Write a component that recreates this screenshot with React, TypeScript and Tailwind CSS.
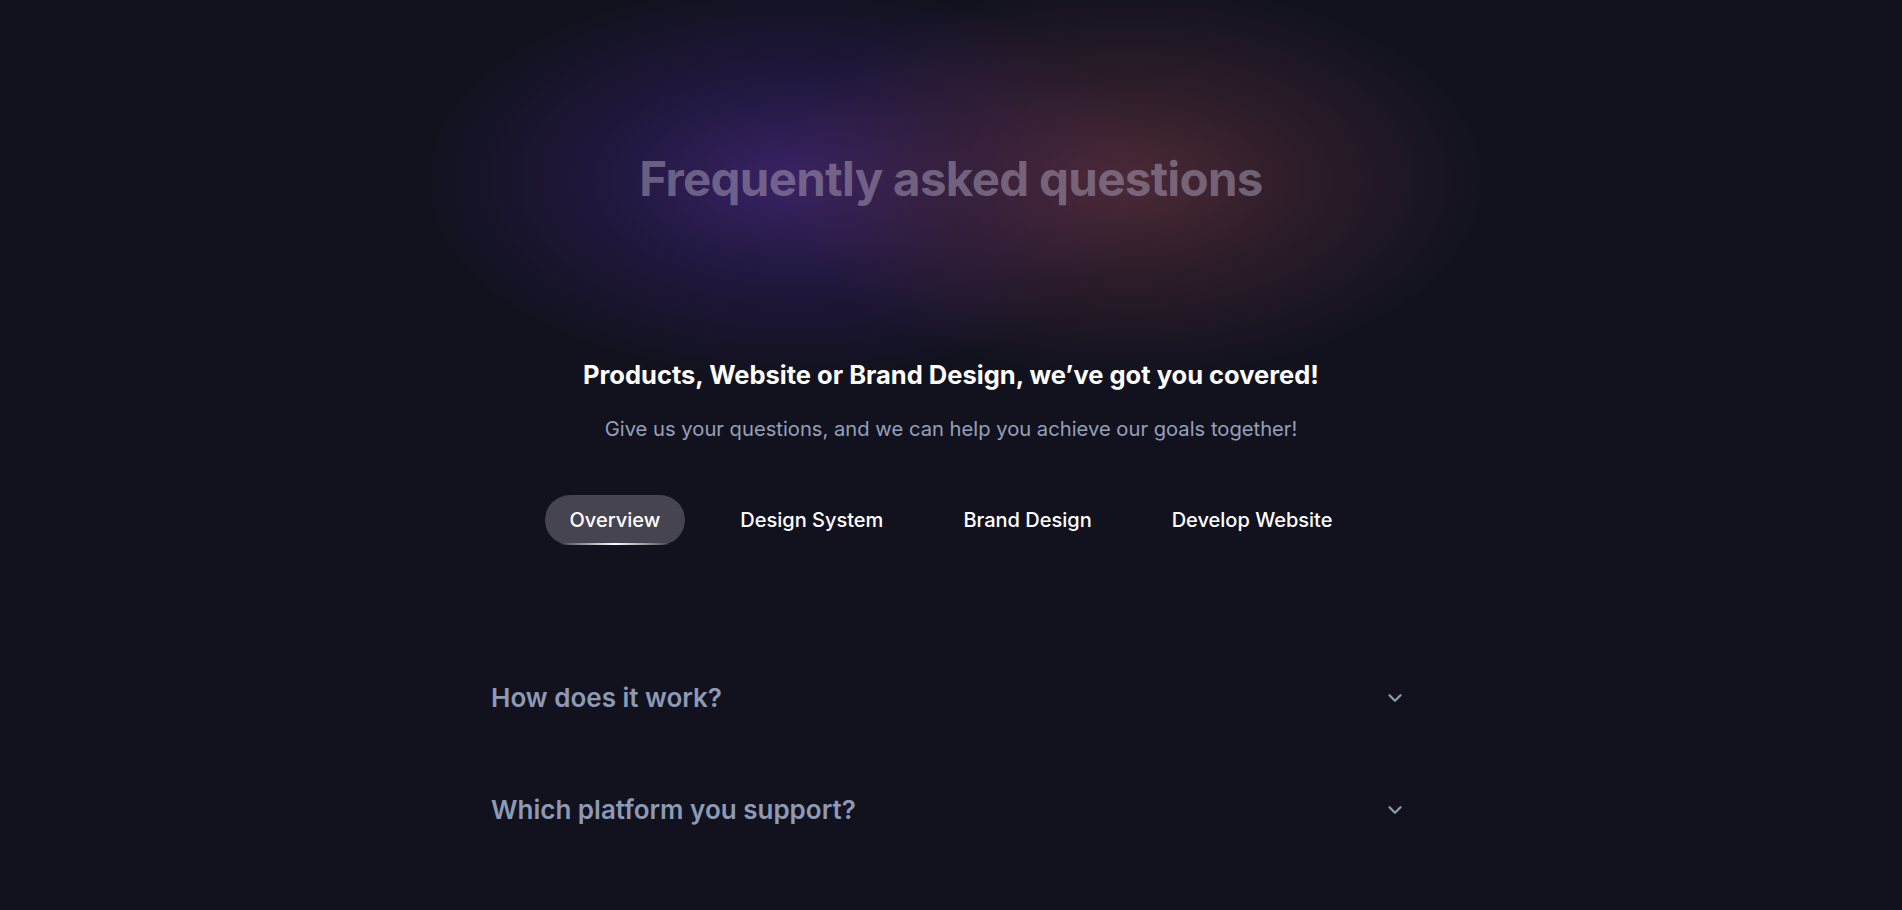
import { useState } from 'react';
import { ChevronDown } from 'lucide-react';

const tabs = ['Overview', 'Design System', 'Brand Design', 'Develop Website'];

const faqs = [
  { q: 'How does it work?', a: 'Tell us what you need, we plan it, design it and ship it together with you.' },
  { q: 'Which platform you support?', a: 'Web, iOS, Android and anything in between.' },
];

const App = () => {
  const [active, setActive] = useState(0);
  const [open, setOpen] = useState<number | null>(null);

  return (
    <div
      className="min-h-screen bg-[#12121f] text-white"
      style={{ fontFamily: 'Inter, "Noto Sans", sans-serif' }}
    >
      <section className="relative flex flex-col items-center pt-[150px]">
        {/* glow behind the title */}
        <div className="pointer-events-none absolute left-1/2 top-0 h-[360px] w-[1000px] -translate-x-1/2">
          <div className="absolute left-[-30px] top-[-20px] h-[400px] w-[740px] bg-[radial-gradient(ellipse_at_center,rgba(70,40,125,0.75)_0%,rgba(50,30,100,0.45)_35%,rgba(18,18,31,0)_70%)]" />
          <div className="absolute left-[320px] top-[-20px] h-[400px] w-[720px] bg-[radial-gradient(ellipse_at_center,rgba(110,55,68,0.62)_0%,rgba(85,44,56,0.38)_35%,rgba(18,18,31,0)_70%)]" />
        </div>

        <h1 className="relative text-[47.5px] font-bold leading-[58px] tracking-[-0.7px] text-[#a69cb4]/55">
          Frequently asked questions
        </h1>

        <h2 className="relative mt-[151px] text-[25.5px] font-bold leading-8 text-white">
          Products, Website or Brand Design, we’ve got you covered!
        </h2>
        <p className="relative mt-6 text-[20.2px] leading-7 text-[#94a0b8]">
          Give us your questions, and we can help you achieve our goals together!
        </p>

        <div className="relative mt-[52px] flex items-center gap-[30px]">
          {tabs.map((t, i) => (
            <button
              key={t}
              onClick={() => setActive(i)}
              className={`relative h-[50px] rounded-full px-[25px] text-[20px] font-medium ${
                active === i ? 'bg-[#45444f] text-white' : 'text-white'
              }`}
            >
              {t}
              {active === i && (
                <span className="absolute bottom-0 left-[14px] right-[14px] h-[2px] bg-[linear-gradient(90deg,rgba(255,255,255,0)_0%,#ffffff_50%,rgba(255,255,255,0)_100%)]" />
              )}
            </button>
          ))}
        </div>
      </section>

      <section className="mx-auto mt-[97px] w-[920px] pb-10">
        {faqs.map((f, i) => (
          <div key={f.q}>
            <button
              onClick={() => setOpen(open === i ? null : i)}
              className="flex w-full items-center justify-between py-10 text-left"
            >
              <span className="text-[26px] font-semibold leading-8 text-[#8d9ab4]">{f.q}</span>
              <ChevronDown size={22} strokeWidth={2.5} className={`mr-[5px] text-[#8d9ab4] ${open === i ? 'rotate-180' : ''}`} />
            </button>
            {open === i && <p className="pb-6 text-[18px] text-[#94a0b8]">{f.a}</p>}
          </div>
        ))}
      </section>
    </div>
  );
};

export default App;
